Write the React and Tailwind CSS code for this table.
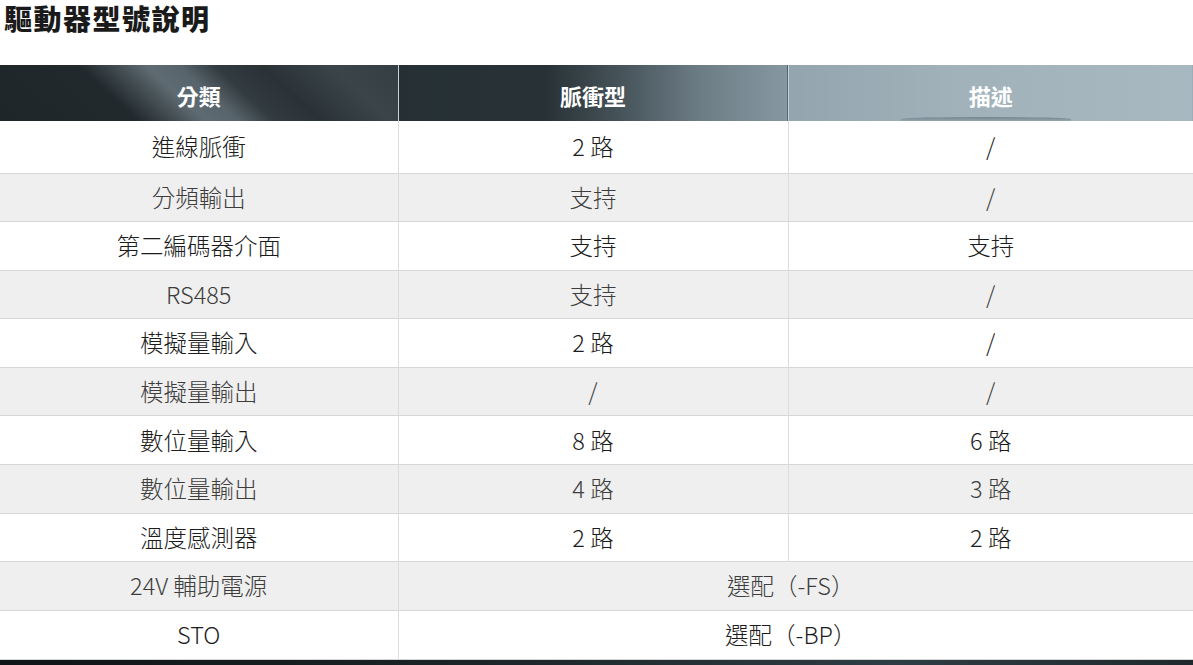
const rows = [
  ["進線脈衝", "2 路", "/"],
  ["分頻輸出", "支持", "/"],
  ["第二編碼器介面", "支持", "支持"],
  ["RS485", "支持", "/"],
  ["模擬量輸入", "2 路", "/"],
  ["模擬量輸出", "/", "/"],
  ["數位量輸入", "8 路", "6 路"],
  ["數位量輸出", "4 路", "3 路"],
  ["溫度感測器", "2 路", "2 路"],
  ["24V 輔助電源", "選配（-FS）"],
  ["STO", "選配（-BP）"],
];

const font = "font-['Noto_Sans_CJK_TC','Noto_Sans',sans-serif]";

// header cells each carry their own slice of the photo-like backdrop
const heads = [
  {
    label: "分類",
    bg: "bg-[linear-gradient(43deg,#1f2629_0%,#22292d_30%,#3d474c_37%,#5f6b72_45%,#58646b_52%,#323b40_60%,#2a3236_70%,#3a4449_85%,#353e43_100%)]",
  },
  {
    label: "脈衝型",
    bg: "bg-[linear-gradient(90deg,#263034_0%,#283236_38%,#48555c_58%,#6d7d86_78%,#8797a1_100%)]",
  },
  {
    label: "描述",
    bg: "bg-[linear-gradient(90deg,#93a4ae_0%,#a0b1ba_40%,#a8b8c1_100%)]",
  },
];

export default function App() {
  return (
    <div className={`w-[1193px] h-[665px] overflow-hidden bg-white ${font}`}>
      <h1 className="pl-[4px] mb-[29px] text-[28px] leading-[36px] font-black text-[#1a1a1a] tracking-[1.5px]">
        驅動器型號說明
      </h1>

      <table className="w-[1193px] table-fixed border-collapse">
        <colgroup>
          <col className="w-[398px]" />
          <col className="w-[390px]" />
          <col className="w-[405px]" />
        </colgroup>
        <thead>
          <tr className="h-[56px]">
            {heads.map((h, i) => (
              <th
                key={h.label}
                className={`relative p-0 pt-[4px] text-[22px] font-bold text-white text-center align-middle ${h.bg} ${
                  i > 0 ? "border-l border-[#c9d1d5]" : ""
                }`}
              >
                {h.label}
                {i === 2 && (
                  <span className="absolute bottom-0 left-[112px] w-[170px] h-[4px] rounded-t-[50%] bg-[linear-gradient(180deg,#72838d,#95a6b0)]" />
                )}
              </th>
            ))}
          </tr>
        </thead>
        <tbody>
          {rows.map((r, idx) => {
            const grey = idx % 2 === 1;
            const txt = grey ? "text-[#3d3d3d]" : "text-[#1c1c1c]";
            const cell = `p-0 text-center text-[23.5px] font-light ${txt}`;
            return (
              <tr
                key={idx}
                className={`${idx === 0 ? "h-[52px]" : "h-[48.6px] border-t border-[#d6d6d6]"} ${
                  grey ? "bg-[#efefef]" : "bg-white"
                }`}
              >
                <td className={cell}>{r[0]}</td>
                {r.length === 3 ? (
                  <>
                    <td className={`${cell} border-l border-[#dcdcdc]`}>{r[1]}</td>
                    <td className={`${cell} border-l border-[#dcdcdc]`}>{r[2]}</td>
                  </>
                ) : (
                  <td colSpan={2} className={`${cell} border-l border-[#dcdcdc]`}>
                    <span className="pr-[10px]">{r[1]}</span>
                  </td>
                )}
              </tr>
            );
          })}
        </tbody>
      </table>
      <div className="h-[8px] border-t border-[#d6d6d6] bg-[linear-gradient(90deg,#0f1416_0%,#1b2427_40%,#2e3d44_75%,#1f292d_100%)]" />
    </div>
  );
}
